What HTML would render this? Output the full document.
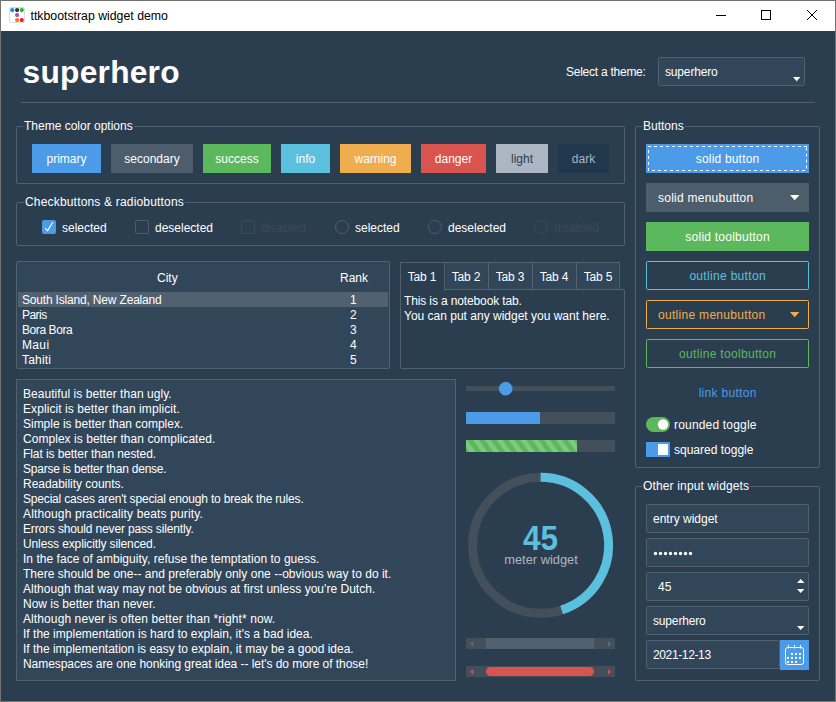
<!DOCTYPE html>
<html><head><meta charset="utf-8">
<style>
*{margin:0;padding:0;box-sizing:border-box}
html,body{width:836px;height:702px;overflow:hidden;background:#2b3e50}
body{position:relative;font-family:"Liberation Sans",sans-serif;font-size:12px;color:#fff}
.a{position:absolute}
.t{position:absolute;white-space:nowrap;line-height:15px;margin-top:1px}
#win{position:absolute;left:0;top:0;width:836px;height:702px;border:1px solid #737373;border-top-color:#6e6e6e}
#title{position:absolute;left:1px;top:1px;width:834px;height:30px;background:#fff}
.lf{position:absolute;border:1px solid #526170;border-radius:2px}
.lft{position:absolute;background:#2b3e50;padding:0 1px;line-height:15px;white-space:nowrap;margin-top:1px}
.btn{position:absolute;height:29px;line-height:29px;text-align:center;color:#fff;padding-top:1px}
.sep{position:absolute;height:1px;background:#526170}
.entry{position:absolute;background:#32465a;border:1px solid #526170;border-radius:1.5px}
</style></head><body>
<div id="win"></div>
<div id="title">
  <svg class="a" style="left:8px;top:6px" width="16" height="16" viewBox="0 0 16 16">
    <rect x="0.5" y="0.5" width="15" height="15" rx="1.5" fill="#fff" stroke="#ddd" stroke-width="1"/>
    <circle cx="3.25" cy="3.1" r="2.1" fill="#1e88e5"/>
    <circle cx="8.1" cy="3.1" r="2.1" fill="#333"/>
    <circle cx="12.8" cy="3.1" r="2.1" fill="#2bb52b"/>
    <circle cx="8.1" cy="8.1" r="2.1" fill="#9b59b6"/>
    <circle cx="8.1" cy="13.05" r="2.1" fill="#ff7711"/>
    <circle cx="12.8" cy="13.05" r="2.1" fill="#ff1144"/>
  </svg>
  <div class="t" style="left:29.5px;top:7px;color:#000;font-size:12.3px">ttkbootstrap widget demo</div>
  <div class="a" style="left:715px;top:14px;width:10px;height:1px;background:#000"></div>
  <div class="a" style="left:760px;top:9px;width:10px;height:10px;border:1px solid #000"></div>
  <svg class="a" style="left:805px;top:8px" width="12" height="12" viewBox="0 0 12 12"><path d="M1 1L11 11M11 1L1 11" stroke="#000" stroke-width="1"/></svg>
</div>

<!-- header -->
<div class="a" style="left:22.6px;top:54.4px;font-size:31.7px;letter-spacing:0.25px;line-height:36px;font-weight:bold;white-space:nowrap">superhero</div>
<div class="t" style="left:566px;top:64px;letter-spacing:-0.25px">Select a theme:</div>
<div class="entry" style="left:658px;top:57px;width:147px;height:29px"></div>
<div class="t" style="left:665px;top:64px;letter-spacing:-0.16px">superhero</div>
<svg class="a" style="left:792.7px;top:77px" width="8" height="5" viewBox="0 0 8 5"><path d="M0 0H7.4L3.7 4.2Z" fill="#fff"/></svg>
<div class="sep" style="left:21px;top:102px;width:794px"></div>

<!-- Theme color options -->
<div class="lf" style="left:16px;top:126px;width:609px;height:58px"></div>
<div class="lft" style="left:23px;top:118px">Theme color options</div>
<div class="btn" style="left:32px;top:144px;width:69px;background:#4c9be8">primary</div>
<div class="btn" style="left:111px;top:144px;width:82px;background:#4e5d6c">secondary</div>
<div class="btn" style="left:203px;top:144px;width:68px;background:#5cb85c">success</div>
<div class="btn" style="left:281px;top:144px;width:49px;background:#5bc0de">info</div>
<div class="btn" style="left:340px;top:144px;width:71px;background:#f0ad4e">warning</div>
<div class="btn" style="left:421px;top:144px;width:65px;background:#d9534f">danger</div>
<div class="btn" style="left:496px;top:144px;width:52px;background:#abb6c2;color:#2b3e50">light</div>
<div class="btn" style="left:558px;top:144px;width:51px;background:#20374c;color:#abb6c2">dark</div>

<!-- Checkbuttons -->
<div class="lf" style="left:16px;top:202px;width:609px;height:44px"></div>
<div class="lft" style="left:24px;top:194px;letter-spacing:0.18px">Checkbuttons &amp; radiobuttons</div>


<!-- checks -->
<div class="a" style="left:42px;top:220px;width:14px;height:14px;background:#4c9be8;border-radius:2px"></div>
<svg class="a" style="left:42px;top:220px" width="14" height="14" viewBox="0 0 14 14"><path d="M3.4 8.3L5.6 10.7L10.6 2.5" fill="none" stroke="#fff" stroke-width="1.15" stroke-linecap="round"/></svg>
<div class="t" style="left:62px;top:220px">selected</div>
<div class="a" style="left:135px;top:220px;width:14px;height:14px;border:1px solid #4e5d6c;border-radius:2px"></div>
<div class="t" style="left:155px;top:220px">deselected</div>
<div class="a" style="left:241px;top:220px;width:14px;height:14px;border:1px solid #3a4b5b;border-radius:2px"></div>
<div class="t" style="left:261px;top:220px;color:#3d4a56">disabled</div>
<div class="a" style="left:335px;top:220px;width:14px;height:14px;border:1px solid #4e5d6c;border-radius:50%"></div>
<div class="t" style="left:355px;top:220px">selected</div>
<div class="a" style="left:428px;top:220px;width:14px;height:14px;border:1px solid #4e5d6c;border-radius:50%"></div>
<div class="t" style="left:448px;top:220px">deselected</div>
<div class="a" style="left:534px;top:220px;width:14px;height:14px;border:1px solid #3a4b5b;border-radius:50%"></div>
<div class="t" style="left:554px;top:220px;color:#3d4a56">disabled</div>

<!-- treeview -->
<div class="entry" style="left:16px;top:261px;width:374px;height:108px"></div>
<div class="t" style="left:157px;top:270px">City</div>
<div class="t" style="left:340px;top:270px">Rank</div>
<div class="a" style="left:18px;top:292px;width:370px;height:15px;background:#526170"></div>
<div class="t" style="left:22px;top:292px;letter-spacing:-0.18px">South Island, New Zealand</div>
<div class="t" style="left:22px;top:307px;letter-spacing:-0.55px">Paris</div>
<div class="t" style="left:22px;top:322px;letter-spacing:-0.42px">Bora Bora</div>
<div class="t" style="left:22px;top:337px;letter-spacing:0.35px">Maui</div>
<div class="t" style="left:22px;top:352px;letter-spacing:0.2px">Tahiti</div>
<div class="t" style="left:350px;top:292px">1</div>
<div class="t" style="left:350px;top:307px">2</div>
<div class="t" style="left:350px;top:322px">3</div>
<div class="t" style="left:350px;top:337px">4</div>
<div class="t" style="left:350px;top:352px">5</div>

<!-- notebook -->
<div class="a" style="left:400px;top:289px;width:225px;height:80px;border:1px solid #526170;border-radius:2px"></div>
<div class="a" style="left:444px;top:262px;width:176px;height:27px;background:#32465a;border:1px solid #526170;border-bottom:none"></div>
<div class="a" style="left:488px;top:262px;width:1px;height:27px;background:#526170"></div>
<div class="a" style="left:532px;top:262px;width:1px;height:27px;background:#526170"></div>
<div class="a" style="left:576px;top:262px;width:1px;height:27px;background:#526170"></div>
<div class="a" style="left:400px;top:262px;width:45px;height:29px;background:#2b3e50;border:1px solid #526170;border-bottom:none"></div>
<div class="t" style="left:407.8px;top:269px;letter-spacing:-0.2px">Tab 1</div>
<div class="t" style="left:451.8px;top:269px;letter-spacing:-0.2px">Tab 2</div>
<div class="t" style="left:495.8px;top:269px;letter-spacing:-0.2px">Tab 3</div>
<div class="t" style="left:539.8px;top:269px;letter-spacing:-0.2px">Tab 4</div>
<div class="t" style="left:583.8px;top:269px;letter-spacing:-0.2px">Tab 5</div>
<div class="t" style="left:404px;top:293px;letter-spacing:-0.13px">This is a notebook tab.</div><div class="t" style="left:404px;top:308px">You can put any widget you want here.</div>

<!-- text -->
<div class="entry" style="left:16px;top:379px;width:440px;height:302px;border-radius:0"></div>
<div class="t" style="left:23px;top:386px;letter-spacing:0.052px">Beautiful is better than ugly.</div>
<div class="t" style="left:23px;top:401px;letter-spacing:0.084px">Explicit is better than implicit.</div>
<div class="t" style="left:23px;top:416px;letter-spacing:-0.017px">Simple is better than complex.</div>
<div class="t" style="left:23px;top:431px;letter-spacing:0.044px">Complex is better than complicated.</div>
<div class="t" style="left:23px;top:446px;letter-spacing:-0.088px">Flat is better than nested.</div>
<div class="t" style="left:23px;top:461px;letter-spacing:-0.241px">Sparse is better than dense.</div>
<div class="t" style="left:23px;top:476px;letter-spacing:-0.033px">Readability counts.</div>
<div class="t" style="left:23px;top:491px;letter-spacing:-0.180px">Special cases aren&#39;t special enough to break the rules.</div>
<div class="t" style="left:23px;top:506px;letter-spacing:0.135px">Although practicality beats purity.</div>
<div class="t" style="left:23px;top:521px;letter-spacing:-0.155px">Errors should never pass silently.</div>
<div class="t" style="left:23px;top:536px;letter-spacing:-0.119px">Unless explicitly silenced.</div>
<div class="t" style="left:23px;top:551px;letter-spacing:0.032px">In the face of ambiguity, refuse the temptation to guess.</div>
<div class="t" style="left:23px;top:566px;letter-spacing:0.021px">There should be one-- and preferably only one --obvious way to do it.</div>
<div class="t" style="left:23px;top:581px;letter-spacing:0.028px">Although that way may not be obvious at first unless you&#39;re Dutch.</div>
<div class="t" style="left:23px;top:596px;letter-spacing:-0.004px">Now is better than never.</div>
<div class="t" style="left:23px;top:611px;letter-spacing:0.100px">Although never is often better than *right* now.</div>
<div class="t" style="left:23px;top:626px;letter-spacing:0.012px">If the implementation is hard to explain, it&#39;s a bad idea.</div>
<div class="t" style="left:23px;top:641px;letter-spacing:-0.014px">If the implementation is easy to explain, it may be a good idea.</div>
<div class="t" style="left:23px;top:656px;letter-spacing:-0.052px">Namespaces are one honking great idea -- let&#39;s do more of those!</div>


<!-- scale & progress -->
<div class="a" style="left:466px;top:386px;width:149px;height:5px;background:#434f5b"></div>
<svg class="a" style="left:490px;top:375px" width="30" height="30" viewBox="490 375 30 30"><circle cx="505.7" cy="388.7" r="6.4" fill="#4c9be8" stroke="#58a6f0" stroke-width="0.8"/></svg>
<div class="a" style="left:466px;top:412px;width:149px;height:12px;background:#434f5b"></div>
<div class="a" style="left:466px;top:412px;width:74px;height:12px;background:#4c9be8"></div>
<div class="a" style="left:466px;top:440px;width:149px;height:12px;background:#434f5b"></div>
<svg class="a" style="left:466px;top:440px" width="111" height="12" viewBox="0 0 111 12"><rect width="111" height="12" fill="#7dc97d"/><g fill="#5cb85c"><path d="M-22.60 0H-16.80L-8.10 12H-13.90Z"/><path d="M-10.75 0H-4.95L3.75 12H-2.05Z"/><path d="M1.10 0H6.90L15.60 12H9.80Z"/><path d="M12.95 0H18.75L27.45 12H21.65Z"/><path d="M24.80 0H30.60L39.30 12H33.50Z"/><path d="M36.65 0H42.45L51.15 12H45.35Z"/><path d="M48.50 0H54.30L63.00 12H57.20Z"/><path d="M60.35 0H66.15L74.85 12H69.05Z"/><path d="M72.20 0H78.00L86.70 12H80.90Z"/><path d="M84.05 0H89.85L98.55 12H92.75Z"/><path d="M95.90 0H101.70L110.40 12H104.60Z"/><path d="M107.75 0H113.55L122.25 12H116.45Z"/><path d="M119.60 0H125.40L134.10 12H128.30Z"/><path d="M131.45 0H137.25L145.95 12H140.15Z"/></g></svg>

<!-- meter -->
<svg class="a" style="left:460px;top:465px" width="160" height="160" viewBox="0 0 160 160">
  <circle cx="80.6" cy="80.3" r="68.0" fill="none" stroke="#434f5b" stroke-width="8.9"/>
  <path d="M80.6 12.30 A68.0 68.0 0 0 1 101.61 144.97" fill="none" stroke="#5bc0de" stroke-width="8.9"/>
</svg>
<div class="t" style="left:500px;top:519.1px;width:81px;text-align:center;font-size:34.6px;line-height:36px;font-weight:bold;color:#5bc0de;transform:scaleX(0.91);transform-origin:40.5px 0">45</div>
<div class="t" style="left:495.5px;top:551.4px;width:91px;text-align:center;font-size:12.85px;color:#abb6c2">meter widget</div>

<!-- scrollbars -->
<div class="a" style="left:466px;top:638px;width:149px;height:11px;background:#434f5b"></div>
<div class="a" style="left:486px;top:638px;width:108px;height:11px;background:#526170"></div>
<svg class="a" style="left:470px;top:640.8px" width="4" height="6" viewBox="0 0 4 6"><path d="M3.4 0V5.4L0 2.7Z" fill="#5d6b78"/></svg>
<svg class="a" style="left:608px;top:640.8px" width="4" height="6" viewBox="0 0 4 6"><path d="M0 0V5.4L3.4 2.7Z" fill="#5d6b78"/></svg>
<div class="a" style="left:466px;top:666px;width:149px;height:11px;background:#434f5b"></div>
<div class="a" style="left:486px;top:667px;width:108px;height:9px;background:#d9534f;border-radius:5px"></div>
<svg class="a" style="left:470px;top:668.8px" width="4" height="6" viewBox="0 0 4 6"><path d="M3.4 0V5.4L0 2.7Z" fill="#e04a45"/></svg>
<svg class="a" style="left:608px;top:668.8px" width="4" height="6" viewBox="0 0 4 6"><path d="M0 0V5.4L3.4 2.7Z" fill="#e04a45"/></svg>

<!-- Buttons frame -->
<div class="lf" style="left:635px;top:126px;width:185px;height:342px"></div>
<div class="lft" style="left:642px;top:118px">Buttons</div>
<div class="btn" style="left:646px;top:144px;width:163px;background:#4c9be8;letter-spacing:0.18px;text-indent:0.18px">solid button</div>
<svg class="a" style="left:640px;top:140px" width="175" height="40" viewBox="640 140 175 40"><g stroke="#fff" stroke-width="1" stroke-dasharray="3 3" fill="none"><path d="M648 146.5H807"/><path d="M806.5 147.5V171"/><path d="M805 170.5H651"/><path d="M648.5 171V147"/></g></svg>
<div class="btn" style="left:646px;top:183px;width:163px;background:#4e5d6c;text-align:left;padding-left:12px;letter-spacing:0.25px">solid menubutton</div>
<svg class="a" style="left:790px;top:195px" width="10" height="6" viewBox="0 0 10 6"><path d="M0 0H9.4L4.7 5.2Z" fill="#fff"/></svg>
<div class="btn" style="left:646px;top:222px;width:163px;background:#5cb85c;letter-spacing:0.24px;text-indent:0.24px">solid toolbutton</div>
<div class="btn" style="left:646px;top:261px;width:163px;border:1px solid #5bc0de;border-radius:1.5px;color:#5bc0de;line-height:27px;letter-spacing:0.32px;text-indent:0.32px">outline button</div>
<div class="btn" style="left:646px;top:300px;width:163px;border:1px solid #f0ad4e;border-radius:1.5px;color:#f0ad4e;line-height:27px;text-align:left;padding-left:11px;letter-spacing:0.3px">outline menubutton</div>
<svg class="a" style="left:790px;top:312px" width="10" height="6" viewBox="0 0 10 6"><path d="M0 0H9.4L4.7 5.2Z" fill="#f0ad4e"/></svg>
<div class="btn" style="left:646px;top:339px;width:163px;border:1px solid #5cb85c;border-radius:1.5px;color:#5cb85c;line-height:27px;letter-spacing:0.32px;text-indent:0.32px">outline toolbutton</div>
<div class="btn" style="left:646px;top:378px;width:163px;color:#4c9be8;letter-spacing:0.3px;text-indent:0.3px">link button</div>
<div class="a" style="left:646px;top:417px;width:24px;height:15px;background:#5cb85c;border-radius:7.5px"></div>
<svg class="a" style="left:646px;top:417px" width="24" height="15" viewBox="0 0 24 15"><circle cx="17" cy="7.5" r="5.2" fill="#fff"/></svg>
<div class="t" style="left:674px;top:417px;letter-spacing:0.18px">rounded toggle</div>
<div class="a" style="left:646px;top:442px;width:24px;height:15px;background:#4c9be8"></div>
<div class="a" style="left:658px;top:444px;width:10px;height:11px;background:#fff"></div>
<div class="t" style="left:674px;top:442px">squared toggle</div>

<!-- Other input widgets -->
<div class="lf" style="left:635px;top:486px;width:185px;height:195px"></div>
<div class="lft" style="left:642px;top:478px;letter-spacing:0.15px">Other input widgets</div>
<div class="entry" style="left:646px;top:504px;width:163px;height:29px"></div>
<div class="t" style="left:653px;top:511px">entry widget</div>
<div class="entry" style="left:646px;top:538px;width:163px;height:29px"></div>
<svg class="a" style="left:650px;top:548px" width="50" height="12" viewBox="650 548 50 12"><g fill="#fff"><circle cx="655.5" cy="553.5" r="1.65"/><circle cx="660.5" cy="553.5" r="1.65"/><circle cx="665.5" cy="553.5" r="1.65"/><circle cx="670.5" cy="553.5" r="1.65"/><circle cx="675.5" cy="553.5" r="1.65"/><circle cx="680.5" cy="553.5" r="1.65"/><circle cx="685.5" cy="553.5" r="1.65"/><circle cx="690.5" cy="553.5" r="1.65"/></g></svg>
<div class="entry" style="left:646px;top:572px;width:163px;height:29px"></div>
<div class="t" style="left:658px;top:579px">45</div>
<svg class="a" style="left:797px;top:579px" width="8" height="14" viewBox="0 0 8 14"><path d="M0 4H7.4L3.7 0Z M0 10H7.4L3.7 14Z" fill="#fff"/></svg>
<div class="entry" style="left:646px;top:606px;width:163px;height:29px"></div>
<div class="t" style="left:653px;top:613px;letter-spacing:-0.16px">superhero</div>
<svg class="a" style="left:797px;top:626px" width="8" height="4" viewBox="0 0 8 4"><path d="M0 0H7.4L3.7 4Z" fill="#fff"/></svg>
<div class="entry" style="left:646px;top:640px;width:134px;height:29px"></div>
<div class="t" style="left:653px;top:647px;letter-spacing:-0.37px">2021-12-13</div>
<div class="a" style="left:780px;top:640px;width:29px;height:30px;background:#4c9be8"></div>
<svg class="a" style="left:780px;top:640px" width="29" height="30" viewBox="0 0 29 30"><rect x="5.5" y="7.5" width="18" height="17" rx="2.2" fill="none" stroke="#fff" stroke-width="1"/><path d="M8.5 5V8.5M14.5 5V8.5M20.5 5V8.5" stroke="#fff" stroke-width="1"/><g fill="#fff"><rect x="11" y="12.95" width="2" height="2"/><rect x="15" y="12.95" width="2" height="2"/><rect x="19" y="12.95" width="2" height="2"/><rect x="7" y="16.9" width="2" height="2"/><rect x="11" y="16.9" width="2" height="2"/><rect x="15" y="16.9" width="2" height="2"/><rect x="19" y="16.9" width="2" height="2"/><rect x="7" y="21" width="2" height="2"/><rect x="11" y="21" width="2" height="2"/><rect x="15" y="21" width="2" height="2"/></g></svg>
</body></html>
